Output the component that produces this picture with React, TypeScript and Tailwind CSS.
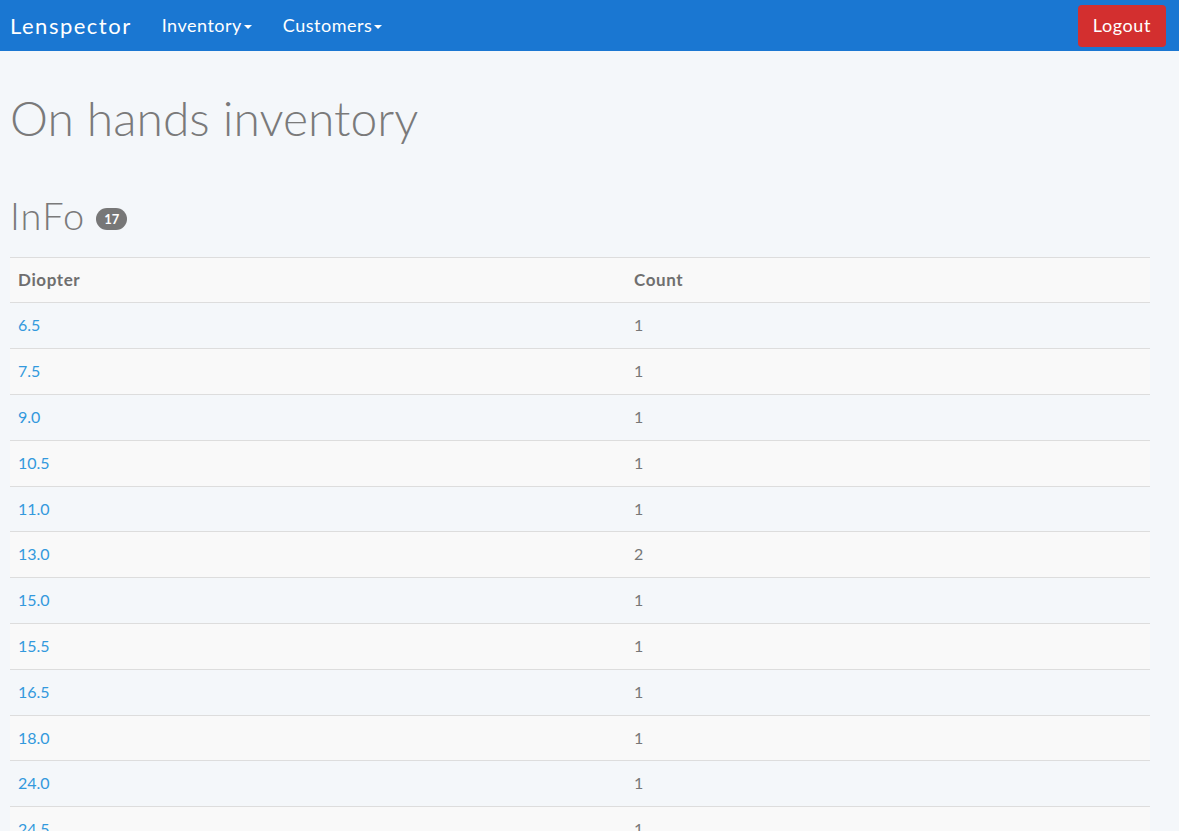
import { useState } from "react"

type Row = { diopter: string; count: number }

const rows: Row[] = [
  { diopter: "6.5", count: 1 },
  { diopter: "7.5", count: 1 },
  { diopter: "9.0", count: 1 },
  { diopter: "10.5", count: 1 },
  { diopter: "11.0", count: 1 },
  { diopter: "13.0", count: 2 },
  { diopter: "15.0", count: 1 },
  { diopter: "15.5", count: 1 },
  { diopter: "16.5", count: 1 },
  { diopter: "18.0", count: 1 },
  { diopter: "24.0", count: 1 },
  { diopter: "24.5", count: 1 },
]

function Caret() {
  return (
    <span className="ml-[2px] inline-block h-0 w-0 border-x-[4px] border-t-[4px] border-x-transparent border-t-white align-middle" />
  )
}

function Navbar() {
  const [open, setOpen] = useState<string | null>(null)

  return (
    <nav className="flex h-[51px] items-center justify-between bg-[#1a77d2] pl-[10px] pr-[13px]">
      <div className="flex items-center">
        <a href="#" className="text-[22px] tracking-[1.5px] text-white">
          Lenspector
        </a>
        <ul className="ml-[30px] flex items-center gap-[31px] text-[18px] tracking-[0.5px] text-white">
          <li>
            <button onClick={() => setOpen(open === "inv" ? null : "inv")}>
              Inventory
              <Caret />
            </button>
          </li>
          <li>
            <button onClick={() => setOpen(open === "cust" ? null : "cust")}>
              Customers
              <Caret />
            </button>
          </li>
        </ul>
      </div>
      <button className="h-[42px] rounded-[4px] bg-[#d32f2f] px-[15px] text-[18px] tracking-[0.6px] text-white">
        Logout
      </button>
    </nav>
  )
}

export default function App() {
  return (
    <div
      className="min-h-[831px] bg-[#f4f7fa] text-[#777]"
      style={{ fontFamily: "Lato, 'Open Sans', sans-serif" }}
    >
      <Navbar />

      <main className="px-[10px]">
        <h1 className="mt-[41px] text-[48px] font-light leading-[1.1] text-[#7a7a7a]">
          On hands inventory
        </h1>

        <h2 className="mt-[50px] flex items-center text-[38px] font-light leading-[1.1] tracking-[1px] text-[#7a7a7a]">
          InFo
          <span className="ml-[11px] mt-[6px] rounded-[11px] bg-[#777] px-[8px] py-[2px] text-[13px] font-bold leading-[18px] tracking-normal text-white">
            17
          </span>
        </h2>

        <table className="mt-[20px] w-[1140px] border-collapse text-left text-[16px]">
          <tbody>
            <tr className="border-t border-[#ddd] bg-[#f9f9f9]">
              <th className="w-[616px] px-[8px] py-[12px] text-[17px] font-bold leading-[20.8px] tracking-[0.6px] text-[#6f6f6f]">
                Diopter
              </th>
              <th className="px-[8px] py-[12px] text-[17px] font-bold leading-[20.8px] tracking-[0.6px] text-[#6f6f6f]">
                Count
              </th>
            </tr>
            {rows.map((r, i) => (
              <tr
                key={r.diopter}
                className={
                  "border-t border-[#ddd] " + (i % 2 === 1 ? "bg-[#f9f9f9]" : "")
                }
              >
                <td className="px-[8px] py-[12px] leading-[20.8px]">
                  <a href="#" className="text-[#3399dd]">
                    {r.diopter}
                  </a>
                </td>
                <td className="px-[8px] py-[12px] leading-[20.8px] text-[#777]">
                  {r.count}
                </td>
              </tr>
            ))}
          </tbody>
        </table>
      </main>
    </div>
  )
}
